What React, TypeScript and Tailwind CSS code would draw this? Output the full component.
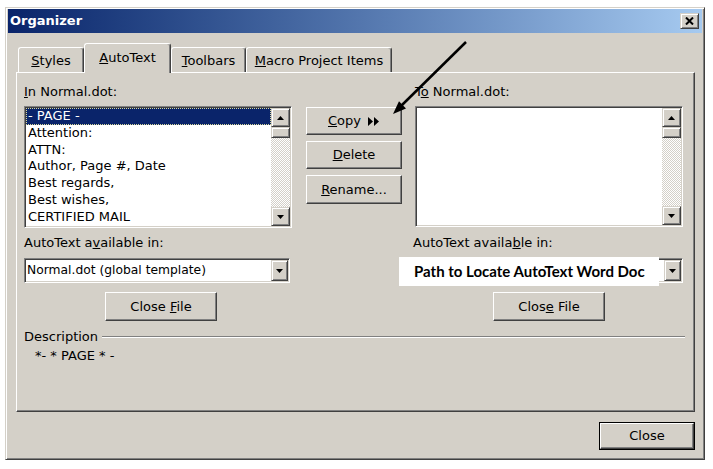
import React from 'react';

const raised =
  'border border-t-white border-l-white border-r-[#404040] border-b-[#404040] shadow-[inset_-1px_-1px_#808080]';
const sunken =
  'border border-t-[#808080] border-l-[#808080] border-r-white border-b-white shadow-[inset_1px_1px_#404040,inset_-1px_-1px_#d4d0c8]';
const smallBtn =
  'border border-t-[#d4d0c8] border-l-[#d4d0c8] border-r-[#404040] border-b-[#404040] shadow-[inset_1px_1px_#fff,inset_-1px_-1px_#808080] bg-[#d4d0c8]';

const Tri = ({ down }: { down?: boolean }) => (
  <svg width="7" height="4" viewBox="0 0 7 4">
    <path d={down ? 'M0 0h7L3.5 4z' : 'M3.5 0L7 4H0z'} fill="#000" />
  </svg>
);

const ScrollBar = () => (
  <div className="flex w-[19px] flex-col bg-[image:repeating-conic-gradient(#fff_0_25%,#d4d0c8_0_50%)] bg-[length:2px_2px]">
    <div className={`${smallBtn} flex h-[19px] items-center justify-center`}>
      <Tri />
    </div>
    <div className={`${smallBtn} h-[11px]`} />
    <div className="flex-1" />
    <div className={`${smallBtn} flex h-[19px] items-center justify-center`}>
      <Tri down />
    </div>
  </div>
);

const items = ['- PAGE -', 'Attention:', 'ATTN:', 'Author, Page #, Date', 'Best regards,', 'Best wishes,', 'CERTIFIED MAIL'];

const Combo = ({ width, children }: { width: string; children?: React.ReactNode }) => (
  <div className={`${sunken} relative flex h-[25px] ${width} items-stretch bg-white p-px`}>
    <div className="flex flex-1 items-center pl-[1px] text-[12.3px]">{children}</div>
    <div className={`${smallBtn} flex w-[17px] items-center justify-center`}>
      <Tri down />
    </div>
  </div>
);

const PushButton = ({ className, children }: { className?: string; children: React.ReactNode }) => (
  <div className={`${raised} flex items-center justify-center bg-[#d4d0c8] ${className ?? ''}`}>{children}</div>
);

const Tab = ({ active, width, children }: { active?: boolean; width: string; children: React.ReactNode }) => (
  <div
    className={`flex ${width} items-center justify-center rounded-t-[3px] border-l border-t border-r border-l-white border-t-white border-r-[#404040] bg-[#d4d0c8] shadow-[inset_-1px_0_#808080] ${
      active ? 'relative z-10 -mb-px h-[30px] pb-[1px]' : 'h-[25px] pt-px'
    }`}
  >
    {children}
  </div>
);

export default function App() {
  return (
    <div className="relative h-[469px] w-[713px] overflow-hidden bg-white font-['DejaVu_Sans',sans-serif] text-[13px] text-black">
      {/* Dialog */}
      <div className="ml-[5px] mt-[7px] flex h-[453px] w-[700px] flex-col border border-t-[#d4d0c8] border-l-[#d4d0c8] border-r-[#404040] border-b-[#404040] bg-[#d4d0c8] px-[2px] pt-px shadow-[inset_1px_1px_#fff,inset_-1px_-1px_#808080]">
        {/* Title bar */}
        <div className="flex h-[24px] items-center justify-between bg-linear-to-r from-[#0a246a] to-[#a6caf0] pl-[2px] pr-[3px]">
          <span className="text-[13px] font-bold text-white">Organizer</span>
          <div className={`${smallBtn} flex h-[16px] w-[19px] items-center justify-center`}>
            <svg width="9" height="8" viewBox="0 0 9 8">
              <path d="M1 0.5L8 7.5M8 0.5L1 7.5" stroke="#000" strokeWidth="2" />
            </svg>
          </div>
        </div>

        <div className="ml-[8px] mr-[7px] flex flex-col">
          {/* Tabs */}
          <div className="mt-[10px] flex items-end pl-[2px]">
            <Tab width="w-[66px]">
              <span>
                <u>S</u>tyles
              </span>
            </Tab>
            <Tab active width="w-[87px]">
              <span>
                <u>A</u>utoText
              </span>
            </Tab>
            <Tab width="w-[75px]">
              <span>
                <u>T</u>oolbars
              </span>
            </Tab>
            <Tab width="w-[146px]">
              <span>
                <u>M</u>acro Project Items
              </span>
            </Tab>
          </div>

          {/* Panel */}
          <div className={`${raised} flex h-[340px] flex-col pl-[7px] pr-[9px] pt-[11px]`}>
            <div className="flex">
              {/* Left column */}
              <div className="flex w-[268px] flex-col">
                <div className="h-[16px] leading-[16px]">
                  <u>I</u>n Normal.dot:
                </div>
                <div className={`${sunken} mt-[6px] flex h-[122px] bg-white p-px`}>
                  <div className="flex flex-1 flex-col">
                    {items.map((it, i) => (
                      <div
                        key={it}
                        className={`border px-px leading-[14.75px] ${
                          i === 0 ? 'border-dotted border-[#d8d89a] bg-[#0a246a] text-white' : 'border-transparent'
                        }`}
                      >
                        {it}
                      </div>
                    ))}
                  </div>
                  <ScrollBar />
                </div>
                <div className="mt-[7px] h-[16px] leading-[16px]">
                  AutoText a<u>v</u>ailable in:
                </div>
                <div className="mt-[7px]">
                  <Combo width="w-[266px]">Normal.dot (global template)</Combo>
                </div>
                <PushButton className="ml-[81px] mt-[9px] h-[29px] w-[112px]">
                  <span>
                    Close <u>F</u>ile
                  </span>
                </PushButton>
              </div>

              {/* Buttons */}
              <div className="ml-[14px] mt-[23px] flex w-[96px] flex-col gap-[6px]">
                <PushButton className="h-[28px] gap-[7px]">
                  <span>
                    <u>C</u>opy
                  </span>
                  <svg width="12" height="9" viewBox="0 0 12 9">
                    <path d="M0 0L5 4.5L0 9zM6 0L11 4.5L6 9z" fill="#000" />
                  </svg>
                </PushButton>
                <PushButton className="h-[28px]">
                  <span>
                    <u>D</u>elete
                  </span>
                </PushButton>
                <PushButton className="h-[29px]">
                  <span>
                    <u>R</u>ename...
                  </span>
                </PushButton>
              </div>

              {/* Right column */}
              <div className="ml-[13px] flex w-[268px] flex-col">
                <div className="h-[16px] leading-[16px]">
                  T<u>o</u> Normal.dot:
                </div>
                <div className={`${sunken} mt-[6px] flex h-[121px] bg-white p-px`}>
                  <div className="flex-1" />
                  <ScrollBar />
                </div>
                <div className="-ml-[2px] mt-[8px] h-[16px] leading-[16px]">
                  AutoText availa<u>b</u>le in:
                </div>
                <div className="mt-[7px]">
                  <Combo width="w-[268px]">
                    {/* annotation pasted over the combo box */}
                    <div className="absolute -left-[17px] -top-[2px] flex h-[29px] w-[260px] items-center bg-white pl-[15px] font-['Lato',sans-serif] text-[15px] font-bold">
                      Path to Locate AutoText Word Doc
                    </div>
                  </Combo>
                </div>
                <PushButton className="ml-[78px] mt-[9px] h-[29px] w-[112px]">
                  <span>
                    Clos<u>e</u> File
                  </span>
                </PushButton>
              </div>
            </div>

            {/* Description */}
            <div className="mt-[8px] flex h-[16px] items-center gap-[4px]">
              <span className="leading-[16px]">Description</span>
              <div className="h-[2px] flex-1 border-t border-b border-t-[#808080] border-b-white" />
            </div>
            <div className="mt-[3px] pl-[11px] leading-[16px]">*- * PAGE * -</div>
          </div>

          {/* Footer */}
          <div className="mt-[10px] flex justify-end">
            <div className="border border-black">
              <PushButton className="h-[26px] w-[94px]">Close</PushButton>
            </div>
          </div>
        </div>
      </div>

      {/* Annotation arrow */}
      <svg className="pointer-events-none absolute left-0 top-0" width="713" height="469" viewBox="0 0 713 469">
        <line x1="466" y1="42" x2="401" y2="106" stroke="#000" strokeWidth="2.5" />
        <polygon points="393,114 406,108.5 399,101.3" fill="#000" />
      </svg>
    </div>
  );
}
